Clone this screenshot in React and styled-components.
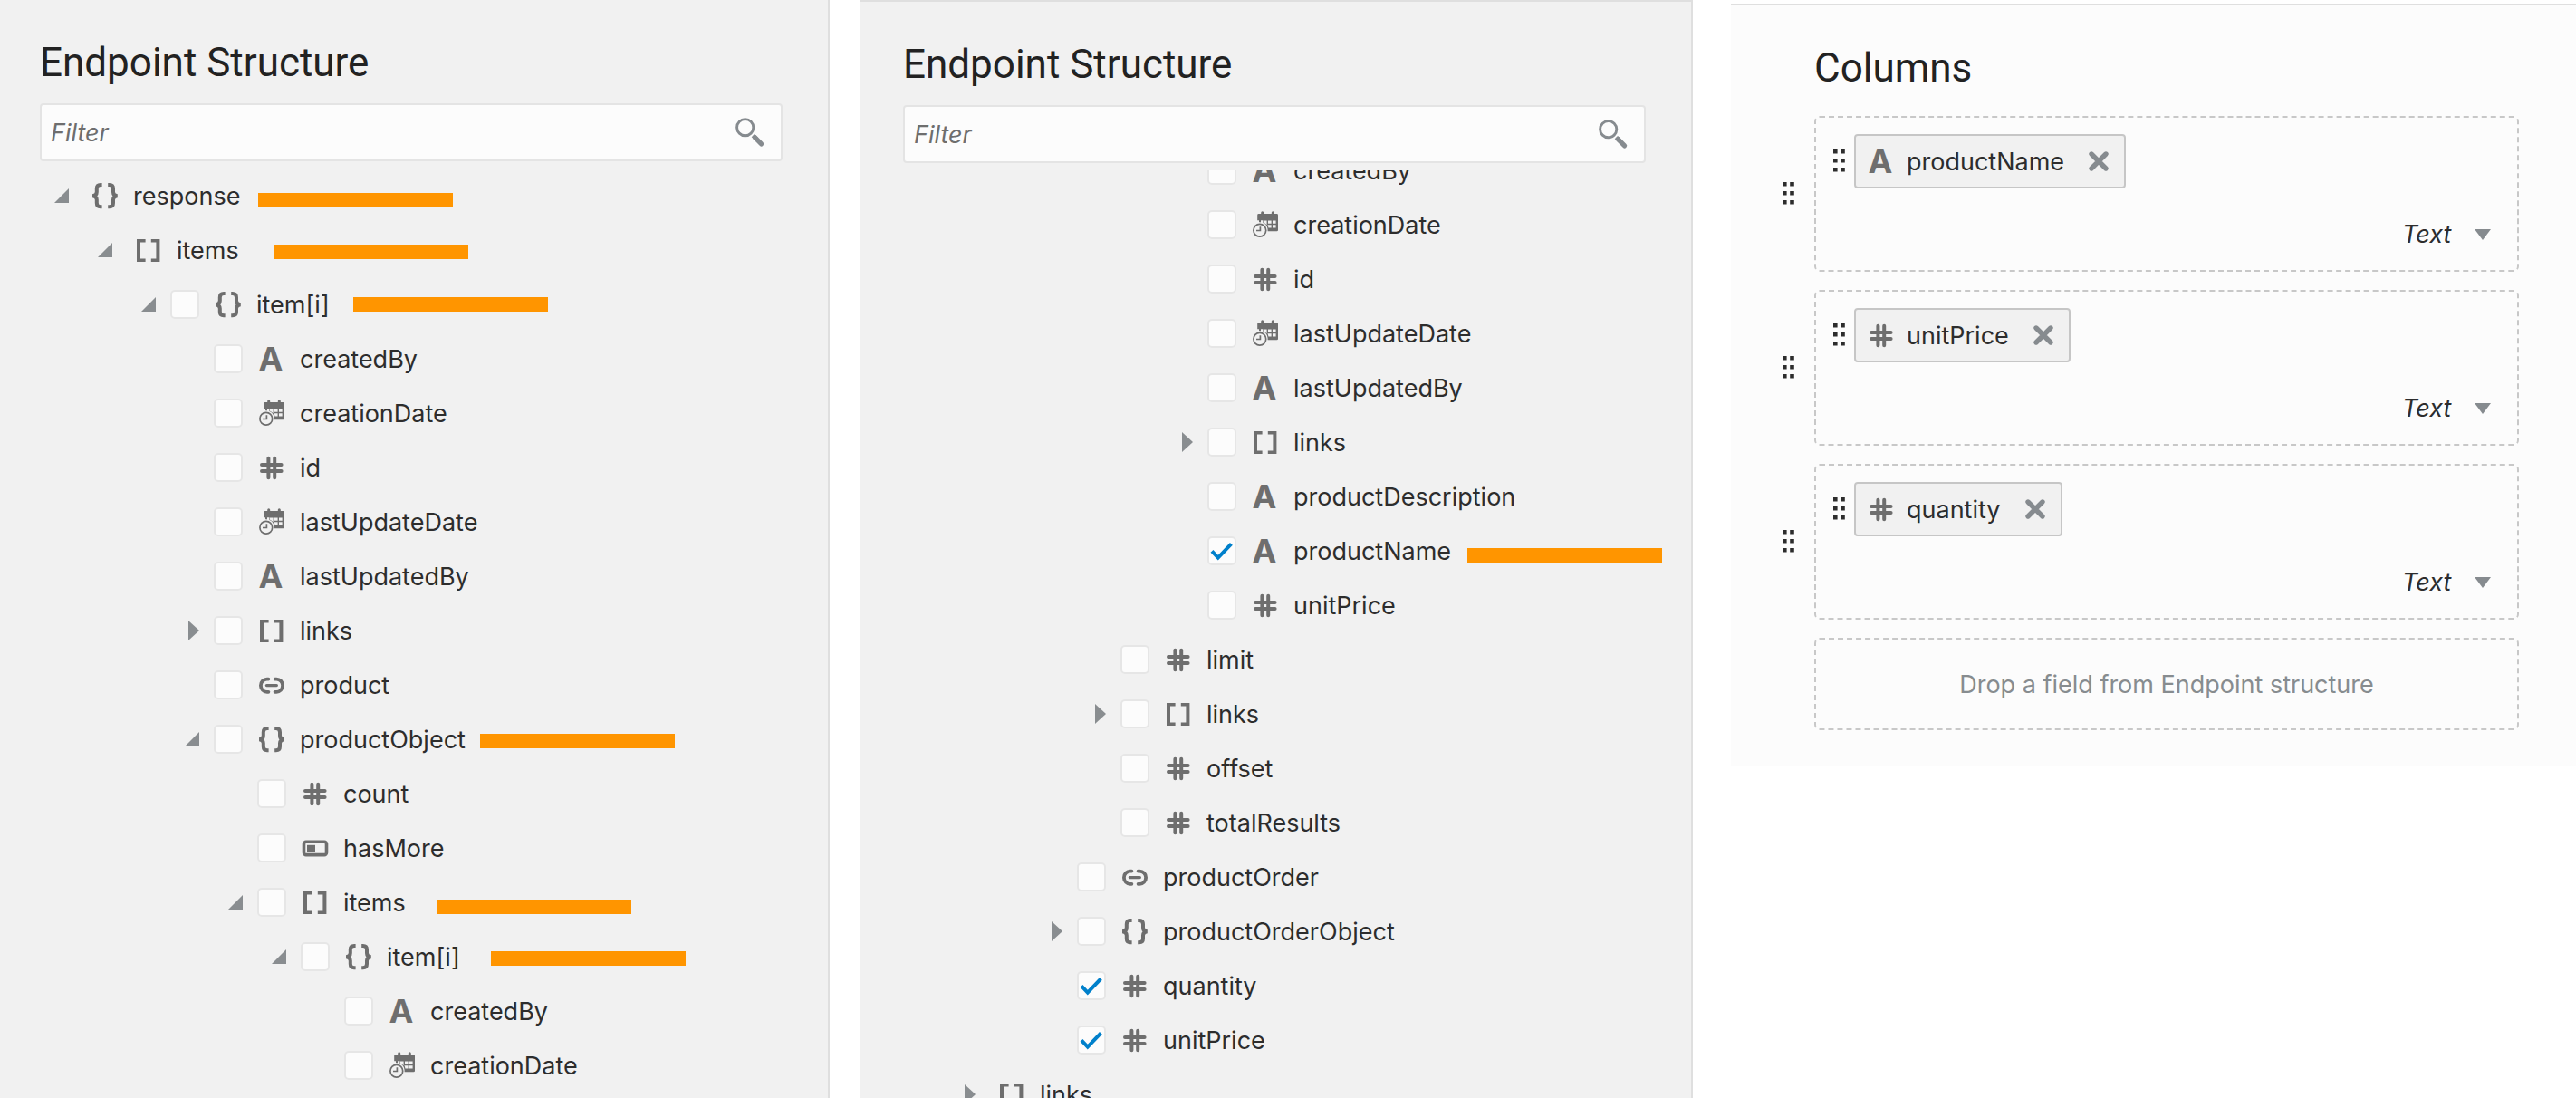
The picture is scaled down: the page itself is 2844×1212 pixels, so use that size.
import React from "react";
import styled, { createGlobalStyle } from "styled-components";

const GlobalStyle = createGlobalStyle`
  *, *::before, *::after { box-sizing: border-box; }
  body {
    margin: 0;
    background: #fff;
    color: #2d2d2d;
    font-family: Inter, "Liberation Sans", sans-serif;
    font-size: 27px;
    line-height: 36px;
  }
  input, button, select { font: inherit; color: inherit; }
`;

/* ---------- layout ---------- */

const Page = styled.main`
  display: grid;
  grid-template-columns: 916fr 920fr 942fr;
  column-gap: 33px;
  align-items: start;
  height: 100vh;
  overflow: hidden;
`;

const StructurePanel = styled.section`
  display: flex;
  flex-direction: column;
  height: 100vh;
  min-width: 0;
  overflow: hidden;
  background: #f1f1f1;
  border-right: 2px solid #dfdfdf;
  border-top: ${(p) => (p.$topLine ? "2px solid #dfdfdf" : "none")};
  padding-left: ${(p) => p.$inset}px;
`;

const ColumnsPanel = styled.section`
  margin: 4px 0 0 9px;
  padding: 0 63px 40px 44px;
  background: #fcfcfc;
  border-top: 2px solid #dfdfdf;
`;

const Title = styled.h2`
  margin: 0;
  padding: 42px 0 ${(p) => p.$bottom}px ${(p) => p.$indent || 0}px;
  font-family: Roboto, "Liberation Sans", sans-serif;
  font-size: 44px;
  line-height: 54px;
  font-weight: 400;
  color: #222;
`;

/* ---------- filter ---------- */

const FilterBox = styled.form`
  display: flex;
  flex: none;
  align-items: center;
  height: 64px;
  margin: 0 50px 8px 0;
  padding: 0 17px 0 10px;
  background: #fcfcfc;
  border: 2px solid #e4e4e4;
  border-radius: 4px;
`;

const FilterInput = styled.input`
  flex: 1;
  min-width: 0;
  padding: 2px 0 0;
  border: 0;
  outline: 0;
  background: none;
  &::placeholder {
    color: #6e6e6e;
    font-style: italic;
    opacity: 1;
  }
`;

const PlainButton = styled.button`
  display: flex;
  flex: none;
  align-items: center;
  justify-content: flex-end;
  padding: 0;
  border: 0;
  background: none;
  cursor: pointer;
`;

/* ---------- tree ---------- */

const TreeView = styled.div`
  flex: 1;
  min-height: 0;
  overflow: hidden;
`;

const TreeList = styled.ul`
  list-style: none;
  margin: ${(p) => (p.$scrolled ? "-30px" : "0")} 0 0;
  padding: 0;
`;

const TreeRow = styled.li`
  display: flex;
  align-items: center;
  height: 60px;
  padding-left: ${(p) => 16 + p.$level * 48}px;
  white-space: nowrap;
`;

const ToggleSlot = styled.span`
  display: flex;
  flex: none;
  width: 16px;
  margin-right: 16px;
  justify-content: flex-end;
`;

const FieldLabel = styled.label`
  display: flex;
  align-items: center;
`;

const CheckFrame = styled.span`
  position: relative;
  width: 32px;
  height: 32px;
  margin-right: 8px;
  svg {
    position: absolute;
    inset: 0;
    pointer-events: none;
    visibility: hidden;
  }
  input:checked + svg { visibility: visible; }
`;

const CheckInput = styled.input`
  display: block;
  appearance: none;
  width: 32px;
  height: 32px;
  margin: 0;
  background: #fcfcfc;
  border: 2px solid #e6e6e6;
  border-radius: 5px;
`;

const IconSlot = styled.span`
  display: flex;
  flex: none;
  align-items: center;
  justify-content: center;
  width: 32px;
  height: 32px;
  margin-left: 8px;
  color: #6e6e6e;
`;

const LetterIcon = styled.span`
  padding-right: 2px;
  font-size: 36px;
  line-height: 32px;
  font-weight: 700;
`;

const FieldName = styled.span`
  padding-top: 2px;
  margin-left: ${(p) => (p.$compact ? 12 : 15)}px;
`;

const Marker = styled.span`
  flex: none;
  width: 215px;
  height: 16px;
  margin-left: ${(p) => p.$gap}px;
  margin-top: ${(p) => p.$drop || 0}px;
  background: #ff9500;
`;

/* ---------- columns ---------- */

const ColumnList = styled.ul`
  list-style: none;
  display: flex;
  flex-direction: column;
  gap: 20px;
  margin: 0;
  padding: 0;
`;

const ColumnRow = styled.li`
  display: flex;
  align-items: center;
`;

const HandleSlot = styled.span`
  display: flex;
  flex: none;
  width: ${(p) => p.$width}px;
  padding-left: ${(p) => p.$inset}px;
  color: #2d2d2d;
`;

const DropZone = styled.div`
  flex: 1;
  min-width: 0;
  display: flex;
  flex-direction: column;
  border: 2px dashed #c8c8c8;
  border-radius: 6px;
`;

const ColumnZone = styled(DropZone)`
  padding: 18px 29px 20px 0;
  gap: 32px;
`;

const EmptyZone = styled(DropZone)`
  align-items: center;
  padding: 32px 0 30px;
  color: #878c8f;
`;

const ChipLine = styled.div`
  display: flex;
  align-items: center;
`;

const Chip = styled.span`
  display: flex;
  align-items: center;
  gap: 26px;
  height: 60px;
  padding: 0 16px 0 4px;
  background: #f1f1f1;
  border: 2px solid #c6c6c6;
  border-radius: 4px;
`;

const ChipBody = styled.span`
  display: flex;
  align-items: center;
`;

const TypeField = styled.label`
  display: flex;
  align-items: center;
  align-self: flex-end;
  height: 38px;
`;

const TypeSelect = styled.select`
  appearance: none;
  margin: 0 -18px 0 0;
  padding: 0 43px 0 0;
  border: 0;
  background: none;
  font-style: italic;
`;

/* ---------- drawings ---------- */

const Svg = ({ w = 32, h = 32, children }) => (
  <svg width={w} height={h} viewBox={`0 0 ${w} ${h}`} fill="none" aria-hidden="true">
    {children}
  </svg>
);

const brace =
  "M12.6 4.1H11c-3 0-4.2 1.4-4.2 4.2v3.6c0 2.6-1.4 4-4.6 4.3 3.2.3 4.6 1.7 4.6 4.3v3.6c0 2.8 1.2 4.2 4.2 4.2h1.6";

const icons = {
  object: (
    <Svg>
      <g stroke="currentColor" strokeWidth="4">
        <path d={brace} />
        <path d={brace} transform="translate(31.8 0) scale(-1 1)" />
      </g>
    </Svg>
  ),
  array: (
    <Svg>
      <path
        fill="currentColor"
        d="M3 4h9.6v3.4H7v18.2h5.6V29H3zM28.4 4h-9.6v3.4h5.6v18.2h-5.6V29h9.6z"
      />
    </Svg>
  ),
  number: (
    <Svg>
      <path
        stroke="currentColor"
        strokeWidth="4"
        strokeLinecap="round"
        d="M12.4 5.8v21.4M19.2 5.8v21.4M5 12.9h21.6M5 19.9h21.6"
      />
    </Svg>
  ),
  link: (
    <Svg>
      <g stroke="currentColor" strokeWidth="3.8" strokeLinecap="round">
        <path d="M12.4 9.6h-1.6a6.9 7.1 0 0 0 0 14.2h1.6M19.6 9.6h1.6a6.9 7.1 0 0 1 0 14.2h-1.6" />
        <path strokeWidth="3.2" d="M10.4 16.6h11" />
      </g>
    </Svg>
  ),
  bool: (
    <Svg>
      <rect x="3.5" y="9.2" width="25" height="14.4" rx="2.4" stroke="currentColor" strokeWidth="3.6" />
      <rect x="7" y="12.8" width="9" height="7.4" fill="currentColor" />
    </Svg>
  ),
  date: (
    <Svg>
      <path
        fill="currentColor"
        fillRule="evenodd"
        d="M7.2 5.4Q7.2 4 8.6 4h2.6V2.8a1.5 1.5 0 0 1 3 0V4h8.6V2.8a1.5 1.5 0 0 1 3 0V4h2.8Q30 4 30 5.4v16.5q0 1.4-1.4 1.4H18.6q.2-5.6-3.2-8.2-2.6-2.2-8.2-2.2zM14 11.6v2.2q2 .6 3.6 2.4v-4.6zM19 11.6v3.2h3.6v-3.2zM24 11.6v3.2h3.6v-3.2zM18.4 16.2q.8 1.4 1 3.2h3.2v-3.2zM24 16.2v3.4h3.6v-3.4z"
      />
      <path fill="#f1f1f1" d="M7 11.2h2v3H7zM11 11.2h2.4v3H11z" />
      <circle cx="9.8" cy="22.2" r="6.9" fill="#f1f1f1" stroke="currentColor" strokeWidth="1.7" />
      <path stroke="currentColor" strokeWidth="1.7" d="M10.4 18.2v4.3H6" />
    </Svg>
  ),
  text: <LetterIcon>A</LetterIcon>,
};

const TypeIcon = ({ type }) => <IconSlot aria-hidden="true">{icons[type]}</IconSlot>;

const SearchIcon = () => (
  <Svg w={34} h={34}>
    <circle cx="11.7" cy="11.7" r="9.1" stroke="#868b8f" strokeWidth="2.9" />
    <path d="M20.4 20.6l4 4.1" stroke="#868b8f" strokeWidth="4.6" />
    <path d="M22.4 22.6l7.2 7.3" stroke="#868b8f" strokeWidth="5.2" strokeLinecap="round" />
  </Svg>
);

const CheckIcon = () => (
  <Svg>
    <path d="M5 16.4l6.8 7.2L26.4 8.4" stroke="#0080cb" strokeWidth="4" />
  </Svg>
);

const ExpandedIcon = () => (
  <Svg w={16} h={16}>
    <path d="M16 0v16H0z" fill="#898d90" />
  </Svg>
);

const CollapsedIcon = () => (
  <Svg w={12} h={22}>
    <path d="M0 0l12 11L0 22z" fill="#898d90" />
  </Svg>
);

const CaretIcon = () => (
  <Svg w={18} h={12}>
    <path d="M0 0h18L9 12z" fill="#868b8f" />
  </Svg>
);

const CloseIcon = () => (
  <Svg w={24} h={24}>
    <path d="M4 4l16 16M20 4L4 20" stroke="#868b8f" strokeWidth="5.4" strokeLinecap="round" />
  </Svg>
);

const HandleIcon = () => (
  <Svg w={14} h={26}>
    <path
      fill="currentColor"
      d="M0 0h4.6v4.6H0zM8.2 0h4.6v4.6H8.2zM0 10h4.6v4.6H0zM8.2 10h4.6v4.6H8.2zM0 20h4.6v4.6H0zM8.2 20h4.6v4.6H8.2z"
    />
  </Svg>
);

/* ---------- data ---------- */

const topOfTree = [
  { level: 0, name: "response", type: "object", open: true, plain: true, mark: [20, 10] },
  { level: 1, name: "items", type: "array", open: true, plain: true, mark: [38, 4] },
  { level: 2, name: "item[i]", type: "object", open: true, mark: [26, 0] },
  { level: 3, name: "createdBy", type: "text" },
  { level: 3, name: "creationDate", type: "date" },
  { level: 3, name: "id", type: "number" },
  { level: 3, name: "lastUpdateDate", type: "date" },
  { level: 3, name: "lastUpdatedBy", type: "text" },
  { level: 3, name: "links", type: "array", open: false },
  { level: 3, name: "product", type: "link" },
  { level: 3, name: "productObject", type: "object", open: true, mark: [16, 4] },
  { level: 4, name: "count", type: "number" },
  { level: 4, name: "hasMore", type: "bool" },
  { level: 4, name: "items", type: "array", open: true, mark: [34, 10] },
  { level: 5, name: "item[i]", type: "object", open: true, mark: [34, 4] },
  { level: 6, name: "createdBy", type: "text" },
  { level: 6, name: "creationDate", type: "date" },
];

const restOfTree = [
  { level: 6, name: "createdBy", type: "text" },
  { level: 6, name: "creationDate", type: "date" },
  { level: 6, name: "id", type: "number" },
  { level: 6, name: "lastUpdateDate", type: "date" },
  { level: 6, name: "lastUpdatedBy", type: "text" },
  { level: 6, name: "links", type: "array", open: false },
  { level: 6, name: "productDescription", type: "text" },
  { level: 6, name: "productName", type: "text", checked: true, mark: [18, 10] },
  { level: 6, name: "unitPrice", type: "number" },
  { level: 4, name: "limit", type: "number" },
  { level: 4, name: "links", type: "array", open: false },
  { level: 4, name: "offset", type: "number" },
  { level: 4, name: "totalResults", type: "number" },
  { level: 3, name: "productOrder", type: "link" },
  { level: 3, name: "productOrderObject", type: "object", open: false },
  { level: 3, name: "quantity", type: "number", checked: true },
  { level: 3, name: "unitPrice", type: "number", checked: true },
  { level: 1, name: "links", type: "array", open: false, plain: true },
];

const columns = [
  { name: "productName", type: "text" },
  { name: "unitPrice", type: "number" },
  { name: "quantity", type: "number" },
];

/* ---------- components ---------- */

function TreeNode({ level, name, type, open, plain, checked, mark }) {
  return (
    <TreeRow $level={level}>
      <ToggleSlot>
        {open !== undefined && (
          <PlainButton type="button" aria-expanded={open} aria-label={name}>
            {open ? <ExpandedIcon /> : <CollapsedIcon />}
          </PlainButton>
        )}
      </ToggleSlot>
      {plain ? (
        <>
          <TypeIcon type={type} />
          <FieldName>{name}</FieldName>
        </>
      ) : (
        <FieldLabel>
          <CheckFrame>
            <CheckInput type="checkbox" defaultChecked={checked} />
            <CheckIcon />
          </CheckFrame>
          <TypeIcon type={type} />
          <FieldName>{name}</FieldName>
        </FieldLabel>
      )}
      {mark && <Marker $gap={mark[0]} $drop={mark[1]} />}
    </TreeRow>
  );
}

function EndpointStructure({ nodes, inset, topLine, scrolled }) {
  return (
    <StructurePanel $inset={inset} $topLine={topLine}>
      <Title $bottom={18}>Endpoint Structure</Title>
      <FilterBox role="search" onSubmit={(e) => e.preventDefault()}>
        <FilterInput type="text" placeholder="Filter" aria-label="Filter" />
        <PlainButton type="submit" aria-label="Filter">
          <SearchIcon />
        </PlainButton>
      </FilterBox>
      <TreeView>
        <TreeList $scrolled={scrolled}>
          {nodes.map((node, i) => (
            <TreeNode key={i} {...node} />
          ))}
        </TreeList>
      </TreeView>
    </StructurePanel>
  );
}

function Column({ name, type }) {
  return (
    <ColumnRow>
      <HandleSlot $width={48} $inset={13}>
        <HandleIcon />
      </HandleSlot>
      <ColumnZone>
        <ChipLine>
          <HandleSlot $width={42} $inset={19}>
            <HandleIcon />
          </HandleSlot>
          <Chip>
            <ChipBody>
              <TypeIcon type={type} />
              <FieldName $compact>{name}</FieldName>
            </ChipBody>
            <PlainButton type="button" aria-label={name}>
              <CloseIcon />
            </PlainButton>
          </Chip>
        </ChipLine>
        <TypeField>
          <TypeSelect aria-label={name} defaultValue="Text">
            <option>Text</option>
          </TypeSelect>
          <CaretIcon />
        </TypeField>
      </ColumnZone>
    </ColumnRow>
  );
}

export default function App() {
  return (
    <>
      <GlobalStyle />
      <Page>
        <EndpointStructure nodes={topOfTree} inset={44} />
        <EndpointStructure nodes={restOfTree} inset={48} topLine scrolled />
        <ColumnsPanel>
          <Title $bottom={26} $indent={48}>
            Columns
          </Title>
          <ColumnList>
            {columns.map((column) => (
              <Column key={column.name} {...column} />
            ))}
            <ColumnRow>
              <HandleSlot $width={48} $inset={13} />
              <EmptyZone>Drop a field from Endpoint structure</EmptyZone>
            </ColumnRow>
          </ColumnList>
        </ColumnsPanel>
      </Page>
    </>
  );
}
